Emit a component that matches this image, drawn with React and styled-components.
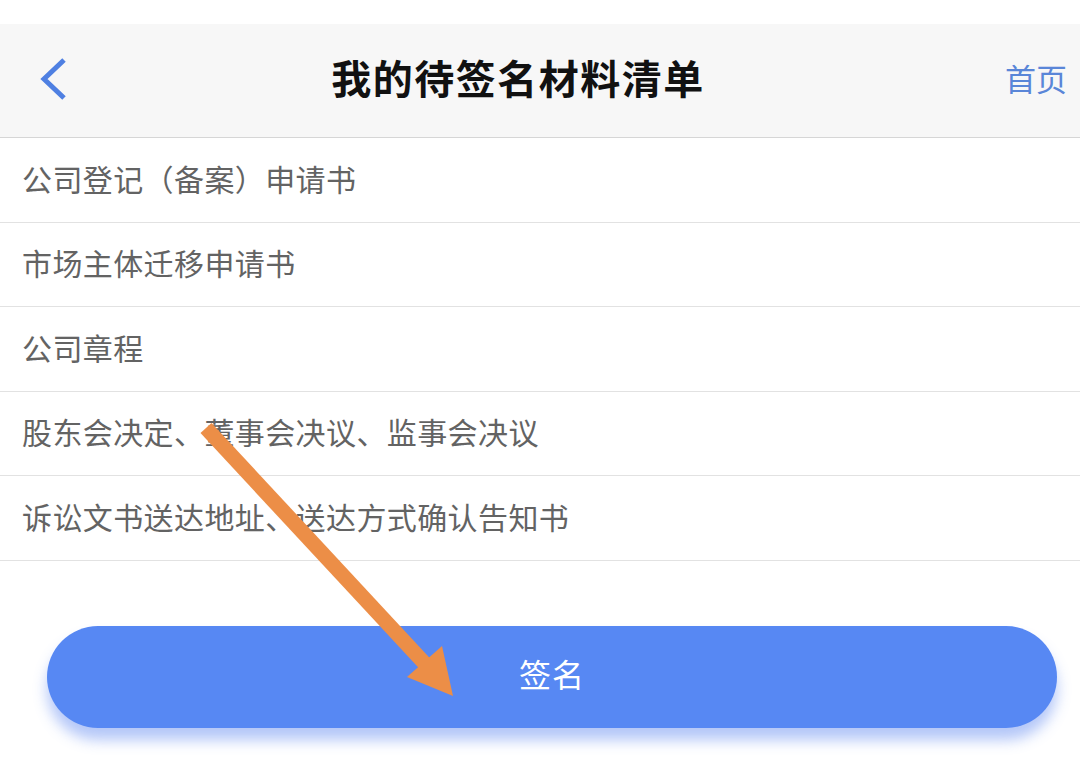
import React from 'react'
import styled, { createGlobalStyle } from 'styled-components'

const GlobalStyle = createGlobalStyle`
    html, body {
        margin: 0;
        padding: 0;
        background: #ffffff;
    }
    body {
        font-family: "Noto Sans CJK SC", "Noto Sans", sans-serif;
    }
`

const items = [
    '公司登记（备案）申请书',
    '市场主体迁移申请书',
    '公司章程',
    '股东会决定、董事会决议、监事会决议',
    '诉讼文书送达地址、送达方式确认告知书',
]

const App = () => (
    <>
        <GlobalStyle />
        <Page>
            <TopGap />
            <NavBar>
                <BackButton aria-label="返回">
                    <svg width="30" height="46" viewBox="0 0 30 46">
                        <path d="M26 3 L6 22 L26 41" fill="none" stroke="#4f80e2" strokeWidth="5" strokeLinecap="butt" strokeLinejoin="miter" />
                    </svg>
                </BackButton>
                <Title>我的待签名材料清单</Title>
                <HomeLink>首页</HomeLink>
            </NavBar>
            <List>
                {items.map(text => (
                    <Row key={text}>{text}</Row>
                ))}
            </List>
            <ButtonArea>
                <SignButton>签名</SignButton>
            </ButtonArea>
            <Pointer viewBox="0 0 1080 767" aria-hidden="true">
                <line x1="206" y1="428" x2="428" y2="667" stroke="#ec8e47" strokeWidth="15" strokeLinecap="butt" />
                <polygon points="453,696 407,677 442,646" fill="#ec8e47" />
            </Pointer>
        </Page>
    </>
)

const Page = styled.div`
    position: relative;
    width: 1080px;
    height: 767px;
    overflow: hidden;
    display: flex;
    flex-direction: column;
`

const TopGap = styled.div`
    height: 24px;
    background: #ffffff;
`

const NavBar = styled.div`
    height: 113px;
    background: #f7f7f7;
    border-bottom: 1px solid #d6d6d6;
    display: grid;
    grid-template-columns: 120px 1fr 120px;
    align-items: center;
`

const BackButton = styled.div`
    padding-left: 38px;
    display: flex;
    align-items: center;
    padding-bottom: 2px;
`

const Title = styled.h1`
    margin: 0 44px 7px 0;
    text-align: center;
    font-size: 40px;
    line-height: 1;
    font-weight: 700;
    color: #111111;
    letter-spacing: 1.5px;
`

const HomeLink = styled.div`
    text-align: right;
    padding: 0 13px 6px 0;
    font-size: 31px;
    line-height: 1;
    color: #5a86d8;
`

const List = styled.div`
    display: flex;
    flex-direction: column;
`

const Row = styled.div`
    height: 84.5px;
    box-sizing: border-box;
    border-bottom: 1px solid #e2e2e2;
    display: flex;
    align-items: center;
    padding: 0 0 4px 22px;
    font-size: 30px;
    letter-spacing: 0.4px;
    color: #636363;
`

const ButtonArea = styled.div`
    padding: 65px 23px 0 47px;
`

const SignButton = styled.div`
    height: 102px;
    box-sizing: border-box;
    padding-bottom: 8px;
    border-radius: 51px;
    background: #5788f3;
    box-shadow: 0 12px 14px rgba(88, 130, 240, 0.45);
    display: flex;
    align-items: center;
    justify-content: center;
    color: #ffffff;
    font-size: 32px;
    letter-spacing: 1px;
`

const Pointer = styled.svg`
    position: absolute;
    left: 0;
    top: 0;
    width: 1080px;
    height: 767px;
    pointer-events: none;
`

export default App
